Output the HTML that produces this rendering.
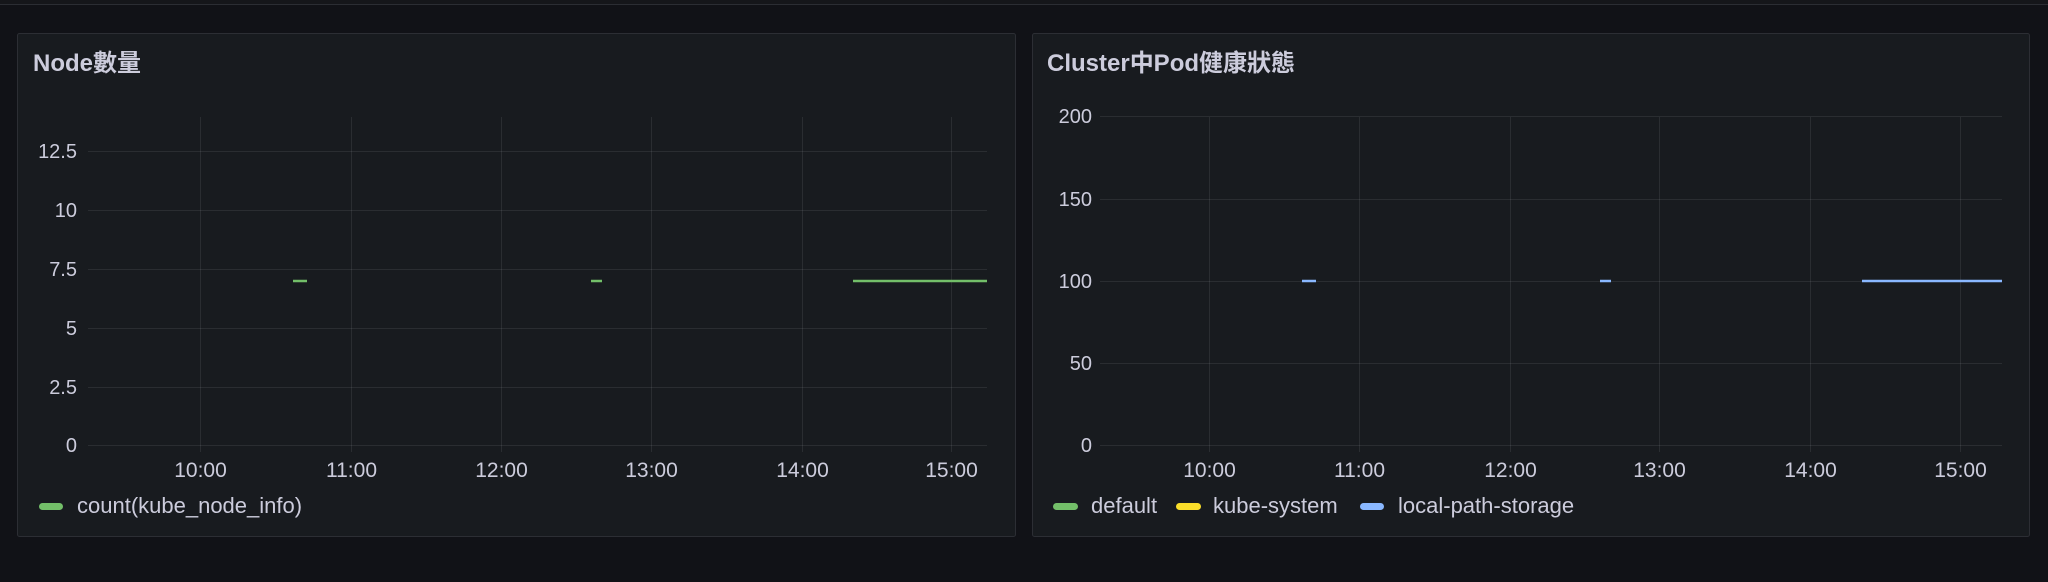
<!DOCTYPE html>
<html><head><meta charset="utf-8"><style>
html,body{margin:0;padding:0;background:#111217;width:2048px;height:582px;overflow:hidden}
svg{display:block}
text{font-family:"Liberation Sans","Noto Sans CJK TC",sans-serif;fill:#ccccdc}
</style></head><body>
<svg width="2048" height="582" viewBox="0 0 2048 582" xmlns="http://www.w3.org/2000/svg">
<rect x="0" y="0" width="2048" height="582" fill="#111217"/>
<rect x="0" y="0" width="2048" height="4" fill="#15161a"/>
<rect x="0" y="4" width="2048" height="1" fill="#2b2d33"/>
<!-- Left panel -->
<rect x="17.5" y="33.5" width="998" height="503" rx="2" fill="#181b1f" stroke="#2c2e34"/>
<text x="33" y="71" font-size="24" font-weight="bold">Node數量</text>
<g stroke="#ccccdc" stroke-opacity="0.1" stroke-width="1">
<line x1="88" y1="151.5" x2="987" y2="151.5"/>
<line x1="88" y1="210.5" x2="987" y2="210.5"/>
<line x1="88" y1="269.5" x2="987" y2="269.5"/>
<line x1="88" y1="328.5" x2="987" y2="328.5"/>
<line x1="88" y1="387.5" x2="987" y2="387.5"/>
<line x1="88" y1="445.5" x2="987" y2="445.5"/>
<line x1="200.5" y1="117" x2="200.5" y2="452"/>
<line x1="351.5" y1="117" x2="351.5" y2="452"/>
<line x1="501.5" y1="117" x2="501.5" y2="452"/>
<line x1="651.5" y1="117" x2="651.5" y2="452"/>
<line x1="802.5" y1="117" x2="802.5" y2="452"/>
<line x1="951.5" y1="117" x2="951.5" y2="452"/>
</g>
<g font-size="20" text-anchor="end">
<text x="77" y="158">12.5</text>
<text x="77" y="217">10</text>
<text x="77" y="276">7.5</text>
<text x="77" y="335">5</text>
<text x="77" y="394">2.5</text>
<text x="77" y="452">0</text>
</g>
<g font-size="21" text-anchor="middle">
<text x="200.5" y="477">10:00</text>
<text x="351.5" y="477">11:00</text>
<text x="501.5" y="477">12:00</text>
<text x="651.5" y="477">13:00</text>
<text x="802.5" y="477">14:00</text>
<text x="951.5" y="477">15:00</text>
</g>
<g stroke="#73bf69" stroke-width="2.5">
<line x1="293" y1="281" x2="307" y2="281"/>
<line x1="591" y1="281" x2="602" y2="281"/>
<line x1="853" y1="281" x2="987" y2="281"/>
</g>
<rect x="39" y="503" width="24" height="7" rx="3.5" fill="#73bf69"/>
<text x="77" y="513" font-size="22">count(kube_node_info)</text>
<!-- Right panel -->
<rect x="1032.5" y="33.5" width="997" height="503" rx="2" fill="#181b1f" stroke="#2c2e34"/>
<text x="1047" y="71" font-size="24" font-weight="bold">Cluster中Pod健康狀態</text>
<g stroke="#ccccdc" stroke-opacity="0.1" stroke-width="1">
<line x1="1100" y1="116.5" x2="2002" y2="116.5"/>
<line x1="1100" y1="199.5" x2="2002" y2="199.5"/>
<line x1="1100" y1="281.5" x2="2002" y2="281.5"/>
<line x1="1100" y1="363.5" x2="2002" y2="363.5"/>
<line x1="1100" y1="445.5" x2="2002" y2="445.5"/>
<line x1="1209.5" y1="117" x2="1209.5" y2="452"/>
<line x1="1359.5" y1="117" x2="1359.5" y2="452"/>
<line x1="1510.5" y1="117" x2="1510.5" y2="452"/>
<line x1="1659.5" y1="117" x2="1659.5" y2="452"/>
<line x1="1810.5" y1="117" x2="1810.5" y2="452"/>
<line x1="1960.5" y1="117" x2="1960.5" y2="452"/>
</g>
<g font-size="20" text-anchor="end">
<text x="1092" y="123">200</text>
<text x="1092" y="206">150</text>
<text x="1092" y="288">100</text>
<text x="1092" y="370">50</text>
<text x="1092" y="452">0</text>
</g>
<g font-size="21" text-anchor="middle">
<text x="1209.5" y="477">10:00</text>
<text x="1359.5" y="477">11:00</text>
<text x="1510.5" y="477">12:00</text>
<text x="1659.5" y="477">13:00</text>
<text x="1810.5" y="477">14:00</text>
<text x="1960.5" y="477">15:00</text>
</g>
<g stroke="#8ab8ff" stroke-width="2.5">
<line x1="1302" y1="281" x2="1316" y2="281"/>
<line x1="1600" y1="281" x2="1611" y2="281"/>
<line x1="1862" y1="281" x2="2002" y2="281"/>
</g>
<rect x="1053" y="503" width="25" height="7" rx="3.5" fill="#73bf69"/>
<text x="1091" y="513" font-size="22">default</text>
<rect x="1176" y="503" width="25" height="7" rx="3.5" fill="#fade2a"/>
<text x="1213" y="513" font-size="22">kube-system</text>
<rect x="1360" y="503" width="24" height="7" rx="3.5" fill="#8ab8ff"/>
<text x="1398" y="513" font-size="22">local-path-storage</text>
</svg>
</body></html>
